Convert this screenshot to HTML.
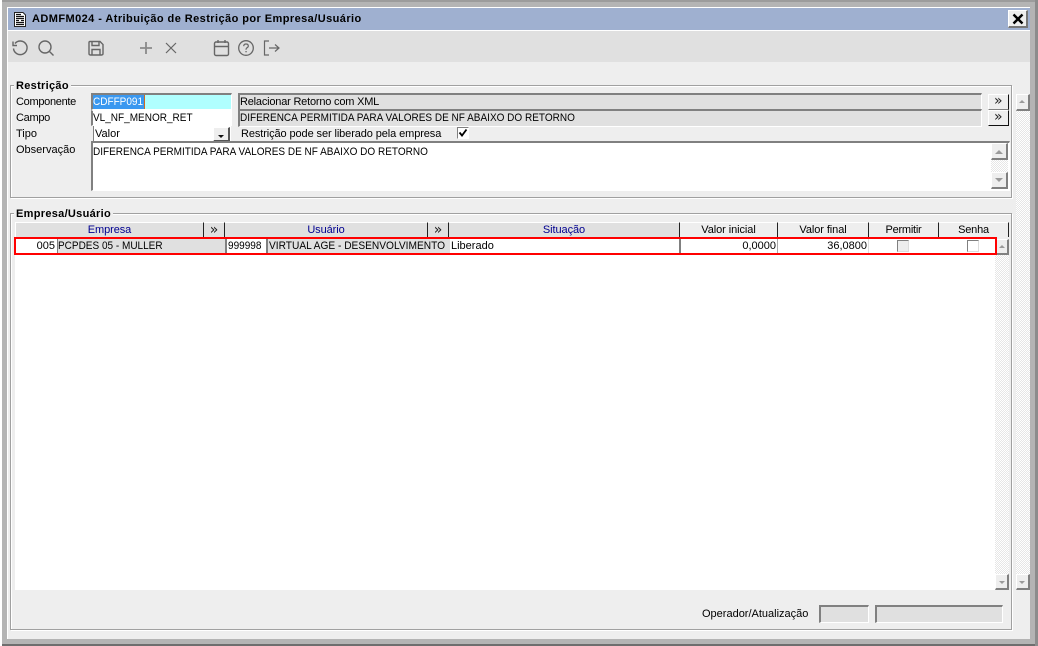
<!DOCTYPE html>
<html><head><meta charset="utf-8"><style>
html,body{margin:0;padding:0;background:#b4b4b4}
#w{position:relative;width:1038px;height:646px;overflow:hidden;background:#b4b4b4;font:11px "Liberation Sans",sans-serif;color:#000}
#w div,#w span.a,#w svg{position:absolute}
.t{white-space:nowrap;line-height:13px}
.n{transform:scaleX(.91);transform-origin:0 0}
.btn{background:#eee;border-top:1px solid #fff;border-left:1px solid #fff;border-right:2px solid #808080;border-bottom:2px solid #808080;box-sizing:border-box}
.dbtn{background:#eee;border-top:1px solid #fff;border-left:1px solid #fff;border-right:1px solid #111;border-bottom:1px solid #808080;box-sizing:border-box}
.sunk{box-sizing:border-box;border-top:2px solid #808080;border-left:2px solid #808080;border-right:1px solid #fff;border-bottom:1px solid #fff}
.dith{background:repeating-conic-gradient(#e6e6e6 0 25%,#fff 0 50%) 0 0/2px 2px}
.grp{box-sizing:border-box;border:1px solid #a0a0a0;box-shadow:inset 1px 1px 0 #fff,1px 1px 0 #fff}
.leg{font-weight:bold;background:#eee;padding:0 2px;color:#000;letter-spacing:.3px}
.h{top:222px;height:15px;background:#e0e0e0;border-top:1px solid #fff;box-sizing:border-box;border-right:1px solid #222;text-align:center;line-height:14px;white-space:nowrap;letter-spacing:-.08px}
.blue{color:#000090}
.ch{font-family:"DejaVu Sans",sans-serif;font-size:14px;color:#222;line-height:15px}
.up{width:0;height:0;border-left:4px solid transparent;border-right:4px solid transparent;border-bottom:4px solid #9a9a9a}
.dn{width:0;height:0;border-left:4px solid transparent;border-right:4px solid transparent;border-top:4px solid #9a9a9a}
.ic{fill:none;stroke:#666;stroke-width:1.4}
</style></head><body><div id="w">
<div style="left:0;top:0;width:1038px;height:2px;background:#9c9c9c"></div>
<div style="left:0;top:644px;width:1038px;height:2px;background:#6e6e6e"></div>
<div style="left:1035px;top:0;width:3px;height:646px;background:#8c8c8c"></div>
<div style="left:0;top:0;width:2px;height:646px;background:#fff"></div>
<div style="left:7px;top:7px;width:1023px;height:632px;background:#eee;border-top:1px solid #fff;border-left:1px solid #fff;box-sizing:border-box"></div>

<div style="left:8px;top:8px;width:1022px;height:22px;background:#9fb0d0"></div>
<div style="left:8px;top:30px;width:1022px;height:1px;background:#fff"></div>
<div style="left:8px;top:31px;width:1022px;height:31px;background:#e0e0e0"></div>

<svg style="left:14px;top:12px" width="12" height="15" viewBox="0 0 12 15"><path d="M.5 .5H9L11.500 3V14.500H.5Z" fill="#fff" stroke="#222"/><path d="M2 2.500h5M2 4.500h8M2 6.500h8M2 8.500h3M7 8.500h3M2 10.500h8M2 12.500h8" stroke="#111" stroke-width="1.300"/></svg>
<div class="t" style="left:32px;top:13px;font-weight:bold;font-size:11px;color:#000;letter-spacing:.43px">ADMFM024 - Atribuição de Restrição por Empresa/Usuário</div>
<div class="btn" style="left:1008px;top:10px;width:20px;height:18px;border-right-color:#777;border-bottom-color:#777"></div>
<svg style="left:1012px;top:13px" width="12" height="12" viewBox="0 0 12 12"><path d="M1.500 1.500 10.500 10.500M10.500 1.500 1.500 10.500" stroke="#000" stroke-width="2.400"/></svg>

<svg class="ic" style="left:11px;top:39px" width="18" height="18" viewBox="0 0 18 18"><path d="M4 4.500A6.800 6.800 0 1 1 2.500 9.500"/><path d="M2 2.500V6.500H6"/></svg>
<svg class="ic" style="left:37px;top:39px" width="18" height="18" viewBox="0 0 18 18"><circle cx="8" cy="8" r="6"/><path d="M12.500 12.500 16.500 16.500"/></svg>
<svg class="ic" style="left:87px;top:39px" width="18" height="18" viewBox="0 0 18 18"><path d="M3 2.500H13L16 5.500V14.500Q16 16 14.500 16H3.500Q2 16 2 14.500V3.500Q2 2.500 3 2.500Z"/><path d="M5 2.500V6.500H12V2.500M5 16V10.500H13V16"/></svg>
<svg style="left:139px;top:41px" width="14" height="14" viewBox="0 0 14 14"><path d="M7 1V13M1 7H13" stroke="#8a8a8a" stroke-width="1.800" fill="none"/></svg>
<svg style="left:165px;top:42px" width="12" height="12" viewBox="0 0 12 12"><path d="M1 1 11 11M11 1 1 11" stroke="#666" stroke-width="1.200" fill="none"/></svg>
<svg class="ic" style="left:213px;top:39px" width="17" height="18" viewBox="0 0 17 18"><rect x="1.500" y="3" width="14" height="13.500" rx="1.500"/><path d="M1.500 7.500H15.500M5 1V4M12 1V4"/></svg>
<svg style="left:237px;top:39px" width="18" height="18" viewBox="0 0 18 18"><circle cx="9" cy="9" r="7.300" fill="none" stroke="#666" stroke-width="1.300"/><path d="M6.700 7.200Q6.800 5 9 5Q11.300 5 11.300 7Q11.300 8.200 9.800 8.900Q9 9.400 9 10.800" fill="none" stroke="#666" stroke-width="1.200"/><rect x="8.400" y="12" width="1.300" height="1.300" fill="#666"/></svg>
<svg class="ic" style="left:263px;top:39px" width="18" height="18" viewBox="0 0 18 18"><path d="M6 2H1.500V16H6M6 9H16M12 5.500 16 9 12 12.500" stroke-width="1.200"/></svg>

<!-- Group 1 -->
<div class="grp" style="left:10px;top:85px;width:1002px;height:113px"></div>
<div class="t leg" style="left:14px;top:80px">Restrição</div>
<div class="t" style="left:16px;top:96px;letter-spacing:-.3px">Componente</div>
<div class="t" style="left:16px;top:112px;letter-spacing:-.3px">Campo</div>
<div class="t" style="left:16px;top:128px">Tipo</div>
<div class="t" style="left:16px;top:144px">Observação</div>

<div class="sunk" style="left:91px;top:93px;width:141px;height:17px;background:#b0ffff"></div>
<div style="left:93px;top:95px;width:51px;height:14px;background:#3a98f0"></div>
<div class="t n" style="left:93px;top:96px;color:#fff">CDFFP091</div>
<div style="left:144px;top:95px;width:1px;height:14px;background:#d06a20"></div>
<div class="sunk" style="left:91px;top:110px;width:141px;height:16px;background:#fff;border-top-width:1px;border-top-color:#fff"></div>
<div class="t n" style="left:93px;top:112px">VL_NF_MENOR_RET</div>
<div style="left:93px;top:126px;width:138px;height:15px;background:#fff;border-left:1px solid #808080;box-sizing:border-box"></div>
<div class="t" style="left:95px;top:128px">Valor</div>
<div class="btn" style="left:213px;top:127px;width:17px;height:15px;border-right-color:#555;border-bottom-color:#555"></div>
<div style="left:218px;top:135px;width:0;height:0;border-left:3px solid transparent;border-right:3px solid transparent;border-top:3px solid #111"></div>

<div class="sunk" style="left:91px;top:141px;width:919px;height:50px;background:#fff"></div>
<div class="t n" style="left:93px;top:146px">DIFERENCA PERMITIDA PARA VALORES DE NF ABAIXO DO RETORNO</div>
<div class="dith" style="left:991px;top:160px;width:17px;height:12px"></div>
<div class="btn" style="left:991px;top:143px;width:17px;height:17px"></div>
<div class="up" style="left:995px;top:150px"></div>
<div class="btn" style="left:991px;top:172px;width:17px;height:17px"></div>
<div class="dn" style="left:995px;top:178px"></div>

<div class="sunk" style="left:238px;top:93px;width:744px;height:17px;background:#e0e0e0"></div>
<div class="t" style="left:240px;top:96px;letter-spacing:-.2px">Relacionar Retorno com XML</div>
<div class="sunk" style="left:238px;top:109px;width:744px;height:18px;background:#e0e0e0"></div>
<div class="t n" style="left:240px;top:112px">DIFERENCA PERMITIDA PARA VALORES DE NF ABAIXO DO RETORNO</div>
<div class="t" style="left:241px;top:128px;letter-spacing:-.1px">Restrição pode ser liberado pela empresa</div>
<div class="sunk" style="left:457px;top:127px;width:12px;height:12px;background:#fff;border-width:1px"></div>
<svg style="left:458px;top:128px" width="10" height="10" viewBox="0 0 10 10"><path d="M1.500 4.500 4 7.500 8.500 1.500" fill="none" stroke="#000" stroke-width="1.800"/></svg>

<div class="dbtn" style="left:988px;top:94px;width:21px;height:16px"></div>
<div class="t ch" style="left:994px;top:94px;line-height:15px">»</div>
<div class="dbtn" style="left:988px;top:110px;width:21px;height:16px;border-bottom-color:#111"></div>
<div class="t ch" style="left:994px;top:110px;line-height:15px">»</div>

<!-- Right scrollbar -->
<div class="dith" style="left:1016px;top:110px;width:14px;height:464px"></div>
<div class="btn" style="left:1016px;top:94px;width:14px;height:17px"></div>
<div class="up" style="left:1019px;top:100px;border-left-width:3px;border-right-width:3px;border-bottom-width:3px"></div>
<div class="btn" style="left:1016px;top:574px;width:14px;height:16px"></div>
<div class="dn" style="left:1019px;top:581px;border-left-width:3px;border-right-width:3px;border-top-width:3px"></div>

<!-- Group 2 -->
<div class="grp" style="left:10px;top:213px;width:1002px;height:417px"></div>
<div class="t leg" style="left:14px;top:208px">Empresa/Usuário</div>
<div style="left:15px;top:222px;width:981px;height:368px;background:#fff"></div>

<div class="h blue" style="left:16px;width:188px">Empresa</div>
<div class="h ch" style="left:204px;width:21px">»</div>
<div class="h blue" style="left:225px;width:203px">Usuário</div>
<div class="h ch" style="left:428px;width:21px">»</div>
<div class="h blue" style="left:449px;width:231px">Situação</div>
<div class="h" style="left:680px;width:98px;background:#eee">Valor inicial</div>
<div class="h" style="left:778px;width:91px;background:#eee">Valor final</div>
<div class="h" style="left:869px;width:70px;background:#eee;letter-spacing:-.25px">Permitir</div>
<div class="h" style="left:939px;width:70px;background:#eee;letter-spacing:-.2px">Senha</div>

<div style="left:57px;top:239px;width:169px;height:15px;background:#e0e0e0;border-left:1px solid #808080;box-sizing:border-box"></div>
<div style="left:225px;top:239px;width:2px;height:15px;background:#808080"></div>
<div style="left:266px;top:239px;width:184px;height:15px;background:#e0e0e0;border-left:2px solid #808080;box-sizing:border-box"></div>
<div style="left:679px;top:239px;width:2px;height:15px;background:#808080"></div>
<div style="left:777px;top:239px;width:1px;height:15px;background:#aaa"></div>
<div style="left:868px;top:239px;width:1px;height:15px;background:#ddd"></div>
<div class="t" style="left:16px;top:240px;width:39px;text-align:right">005</div>
<div class="t n" style="left:58px;top:240px">PCPDES 05 - MULLER</div>
<div class="t n" style="left:228px;top:240px">999998</div>
<div class="t n" style="left:269px;top:240px;transform:scaleX(.925)">VIRTUAL AGE - DESENVOLVIMENTO</div>
<div class="t" style="left:451px;top:240px">Liberado</div>
<div class="t" style="left:700px;top:240px;width:76px;text-align:right">0,0000</div>
<div class="t" style="left:790px;top:240px;width:77px;text-align:right">36,0800</div>
<div class="sunk" style="left:897px;top:240px;width:12px;height:12px;background:#eee;border-width:1px;border-right-color:#ddd;border-bottom-color:#ddd"></div>
<div class="sunk" style="left:967px;top:240px;width:12px;height:12px;background:#fff;border-width:1px;border-right-color:#ddd;border-bottom-color:#ddd"></div>

<div class="dith" style="left:995px;top:255px;width:14px;height:319px"></div>
<div class="btn" style="left:995px;top:239px;width:14px;height:16px"></div>
<div class="up" style="left:999px;top:245px;border-left-width:3px;border-right-width:3px;border-bottom-width:3px"></div>
<div class="btn" style="left:995px;top:574px;width:14px;height:16px"></div>
<div class="dn" style="left:999px;top:581px;border-left-width:3px;border-right-width:3px;border-top-width:3px"></div>
<div style="left:14px;top:237px;width:983px;height:18px;box-sizing:border-box;border:2px solid #f00"></div>

<div class="t" style="left:702px;top:608px">Operador/Atualização</div>
<div class="sunk" style="left:819px;top:605px;width:50px;height:18px;background:#e0e0e0"></div>
<div class="sunk" style="left:875px;top:605px;width:128px;height:18px;background:#e0e0e0"></div>
</div></body></html>
